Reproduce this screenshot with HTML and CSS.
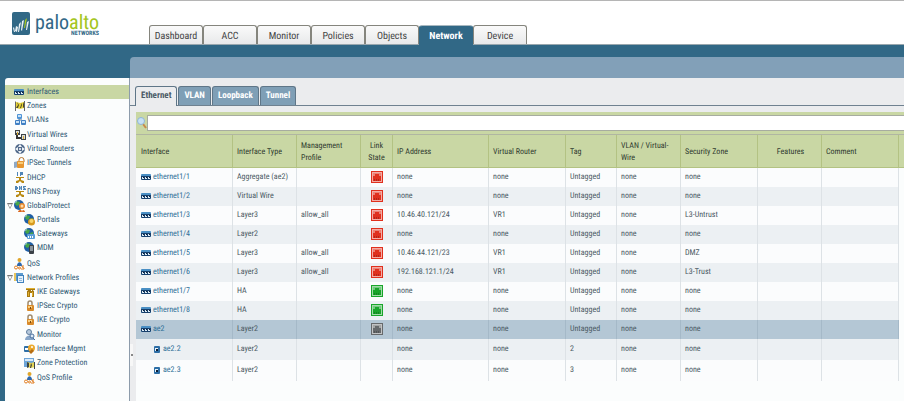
FILE: index.html
```html
<!DOCTYPE html>
<html lang="en">
<head>
    <meta charset="UTF-8">
    <meta name="viewport" content="width=device-width, initial-scale=1.0">
    <title>Network - Interfaces</title>
    <link rel="stylesheet" href="styles.css">
</head>
<body>
    <!-- shared icons -->
    <svg class="sprite" aria-hidden="true">
        <symbol id="i-interface" viewBox="0 0 12 12">
            <rect x="0" y="3" width="10" height="6" rx="1" fill="#4a8fc4"/>
            <path d="M0 5h10v3l-1 1H1L0 8z" fill="#173f6b"/>
            <path d="M1 6h2v2H1zM4 6h2v2H4zM7 6h2v2H7z" fill="#dcecf7"/>
            <path d="M2 6h1v1H2zM5 6h1v1H5zM8 6h1v1H8z" fill="#0b1f38"/>
        </symbol>
        <symbol id="i-sub" viewBox="0 0 12 12">
            <rect x="3" y="3" width="6" height="7" rx="1" fill="#2d6ea6"/>
            <path d="M4 5h3v3H4z" fill="#e8f2fa"/>
            <path d="M5 6h2v2H5z" fill="#0b1f38"/>
        </symbol>
        <symbol id="i-zones" viewBox="0 0 12 12">
            <path d="M1 2l1-1v10H1zM10 1h1v10h-1z" fill="#666"/>
            <path d="M2 2l4 1 4-1v6L6 9 2 8z" fill="#e6d23a"/>
            <path d="M3 2l2 3-1 3H2l2-3zM7 3l1 2-1 3H6l1-3zM9 2l1 2v3L9 8z" fill="#4c4a2a"/>
        </symbol>
        <symbol id="i-vlans" viewBox="0 0 12 12">
            <path d="M5 4v3M3 8l2-2h3l2 2" stroke="#5d7892" fill="none"/>
            <rect x="3" y="0" width="5" height="5" rx="1" fill="#4f94d6"/>
            <rect x="1" y="6" width="5" height="5" rx="1" fill="#3f7fc4"/>
            <rect x="7" y="6" width="5" height="5" rx="1" fill="#3f7fc4"/>
            <path d="M4 1h3v2H4zM2 7h3v2H2zM8 7h3v2H8z" fill="#c9e2f7"/>
        </symbol>
        <symbol id="i-vwires" viewBox="0 0 12 12">
            <path d="M1 1h5v5H1zM7 5h5v6H7z" fill="#3f4446"/>
            <path d="M2 2h3v2H2zM8 6h3v4H8z" fill="#d9dcdc"/>
            <path d="M3 6v3h4" stroke="#333" stroke-width="2" fill="none"/>
            <path d="M3 3h1v3H3zM9 7h1v3H9z" fill="#d7aa35"/>
        </symbol>
        <symbol id="i-router" viewBox="0 0 12 12">
            <circle cx="6" cy="6" r="5" fill="#50698a"/>
            <path d="M6 1l2 3H4zM6 11l2-3H4zM1 6l3-2v4zM11 6L8 4v4z" fill="#eef3f7"/>
            <circle cx="6" cy="6" r="1" fill="#fff"/>
        </symbol>
        <symbol id="i-tunnel" viewBox="0 0 12 12">
            <path d="M0 5l5-1v6l-5 1z" fill="#8fa9c5"/>
            <path d="M5 5V3a2 2 0 0 1 5 0v2" stroke="#b8742a" fill="none"/>
            <rect x="3" y="4" width="7" height="7" rx="1" fill="#e7962f"/>
            <path d="M4 5h5v2H4z" fill="#f8cb78"/>
        </symbol>
        <symbol id="i-dhcp" viewBox="0 0 12 12">
            <path d="M3 0h1v4H3zM6 0h3v3H7v1H6z" fill="#4f86b8"/>
            <path d="M2 5h8v1H2zM5 6h2v2l3 1v2H8L6 9l-2 2H2V9l3-1z" fill="#b98a12"/>
        </symbol>
        <symbol id="i-dns" viewBox="0 0 12 12">
            <path d="M1 0h2v1h1v2H3v1H1zM5 0h1l1 2V0h1v4H7L6 2v2H5zM9 0h3v1h-2l2 2v1H9V3h1L9 2z" fill="#4f86b8"/>
            <path d="M2 5h8v1H2zM5 6h2v2l3 1v2H8L6 9l-2 2H2V9l3-1z" fill="#b98a12"/>
        </symbol>
        <symbol id="i-globe" viewBox="0 0 12 12">
            <circle cx="5" cy="5" r="5" fill="#1f5fa5"/>
            <path d="M2 1l4 1-1 3-2 1-2-2zM6 5l3-1v3L6 9z" fill="#45a548"/>
            <path d="M1 2l2-1-1 2z" fill="#b9ddf5"/>
        </symbol>
        <symbol id="i-gp" viewBox="0 0 12 12">
            <use href="#i-globe"/>
            <circle cx="8" cy="6" r="3" fill="#e8892b"/>
            <circle cx="8" cy="6" r="1.500" fill="#fbdcae"/>
            <path d="M4 12c0-3 7-3 7 0z" fill="#d9661d"/>
            <path d="M7 9h2l-1 3z" fill="#fff"/>
        </symbol>
        <symbol id="i-portal" viewBox="0 0 12 12">
            <use href="#i-globe"/>
            <circle cx="7.500" cy="8" r="3.500" fill="#d79a1e"/>
            <circle cx="7.500" cy="7" r="2" fill="#f9d56a"/>
        </symbol>
        <symbol id="i-gateway" viewBox="0 0 12 12">
            <use href="#i-globe"/>
            <rect x="3" y="6" width="8" height="5" rx="1" fill="#5b9ed6"/>
            <path d="M4 8h1v2H4zM6 8h1v2H6zM8 8h1v2H8z" fill="#fff"/>
        </symbol>
        <symbol id="i-mdm" viewBox="0 0 12 12">
            <use href="#i-globe"/>
            <rect x="5" y="3" width="5" height="9" rx="1" fill="#3b4147"/>
            <path d="M6 4h3v5H6z" fill="#8a949c"/>
        </symbol>
        <symbol id="i-qos" viewBox="0 0 12 12">
            <circle cx="5.500" cy="2" r="2" fill="#e0a52a"/>
            <path d="M3 8c0-5 5-5 5 0z" fill="#2d68ad"/>
            <circle cx="2" cy="9.500" r="1.500" fill="#fff" stroke="#e07b1c"/>
            <circle cx="5.500" cy="10" r="1" fill="#fff" stroke="#e07b1c"/>
            <path d="M10 8H8v1l2 1v1H7" fill="none" stroke="#e07b1c"/>
        </symbol>
        <symbol id="i-profiles" viewBox="0 0 12 12">
            <path d="M0 1h7v8H0z" fill="#e9c65e"/>
            <path d="M2 1h7v8H2z" fill="#5c9bd0"/>
            <path d="M3 3h7v8H3z" fill="#3f81bd"/>
            <path d="M4 4h5v6H4z" fill="#e4f0fa"/>
            <path d="M5 6h3v1H5zM5 8h3v1H5z" fill="#8db7da"/>
        </symbol>
        <symbol id="i-ike" viewBox="0 0 12 12">
            <path d="M2 2h9v2H2zM3 5h7v2H3zM4 4h2v7H3V6zM8 4h1l1 2v5H8zM6 3h1v3H6z" fill="#a87a10"/>
            <path d="M2 2h9v1H2zM4 6h1v4H4zM8 6h1v4H8z" fill="#e0b030"/>
        </symbol>
        <symbol id="i-lock" viewBox="0 0 12 12">
            <path d="M4 6V3a2 2 0 0 1 4 0v3" stroke="#a08a6c" stroke-width="1.500" fill="none"/>
            <rect x="3" y="5" width="7" height="6" rx="1" fill="#d98a2a"/>
            <path d="M4 6h4v2H4z" fill="#f8cf80"/>
            <path d="M6 7h1v2H6z" fill="#7a4a10"/>
        </symbol>
        <symbol id="i-monitor" viewBox="0 0 12 12">
            <circle cx="5" cy="3" r="2.500" fill="#b7c9dc" stroke="#5f7d9e"/>
            <path d="M1 11c0-6 9-6 9 0z" fill="#88a6c8"/>
            <circle cx="8" cy="7" r="2" fill="#dce9f6" stroke="#496f9d"/>
            <path d="M9 9l2 2" stroke="#496f9d"/>
        </symbol>
        <symbol id="i-mgmt" viewBox="0 0 12 12">
            <rect x="0" y="3" width="8" height="6" rx="1" fill="#2d6ea6"/>
            <path d="M1 5h3v2H1z" fill="#fff"/>
            <circle cx="7.500" cy="5" r="3.500" fill="#eba92d"/>
            <path d="M5 9l3-3 2 2-3 3z" fill="#b56d13"/>
            <circle cx="8" cy="4" r="1" fill="#fff"/>
        </symbol>
        <symbol id="i-zoneprot" viewBox="0 0 12 12">
            <path d="M0 1h10v9H0z" fill="#6da5d8"/>
            <path d="M1 2h8v2H1z" fill="#d7e9f8"/>
            <path d="M3 5l4 1 4-1v5l-4 1-4-1z" fill="#e4d456"/>
            <path d="M3 5l2 1v4l-2 1zM7 6l1 2-1 3H6zM10 5h1v7h-1z" fill="#3d4442"/>
        </symbol>
        <symbol id="i-port" viewBox="0 0 12 12">
            <path d="M0 0h12v12H0z" fill="currentColor"/>
            <path d="M1 1h10v10H1z" fill="#fff" opacity=".6"/>
            <path d="M2 2h8v8H2z" fill="currentColor" opacity=".35"/>
            <path d="M2 5h2V3h4v2h2v5H2z" fill="currentColor"/>
            <path d="M3 8h1v2H3zM5 8h1v2H5zM7 8h1v2H7z" fill="#000" opacity=".2"/>
        </symbol>
    </svg>

    <header class="top">
        <a class="logo" href="#">
            <svg class="logo-mark" viewBox="0 0 18 23" aria-hidden="true">
                <rect width="18" height="23" rx="2" fill="#316886"/>
                <path d="M1 16l1-1 1 5H2zM4 14l2 1-1 5-2-1zM7 12l2-2-2 10H6z" fill="#e9f1f5"/>
                <path d="M10 9l2-1-2 11-1-1zM15 10l2-1-2 9h-1z" fill="#e9f1f5"/>
                <path d="M13 8l2-2-2 10h-1z" fill="#a3c520"/>
            </svg>
            <span class="logo-text">
                <span class="logo-name">palo<span class="green">alto</span></span>
                <span class="logo-sub">NETWORKS</span>
            </span>
        </a>
        <nav class="main-tabs">
            <a href="#">Dashboard</a>
            <a href="#">ACC</a>
            <a href="#">Monitor</a>
            <a href="#">Policies</a>
            <a href="#">Objects</a>
            <a href="#" class="active">Network</a>
            <a href="#">Device</a>
        </nav>
    </header>

    <div class="page">
        <nav class="sidebar">
            <ul class="tree">
                <li><a href="#" class="selected"><svg><use href="#i-interface"/></svg>Interfaces</a></li>
                <li><a href="#"><svg><use href="#i-zones"/></svg>Zones</a></li>
                <li><a href="#"><svg><use href="#i-vlans"/></svg>VLANs</a></li>
                <li><a href="#"><svg><use href="#i-vwires"/></svg>Virtual Wires</a></li>
                <li><a href="#"><svg><use href="#i-router"/></svg>Virtual Routers</a></li>
                <li><a href="#"><svg><use href="#i-tunnel"/></svg>IPSec Tunnels</a></li>
                <li><a href="#"><svg><use href="#i-dhcp"/></svg>DHCP</a></li>
                <li><a href="#"><svg><use href="#i-dns"/></svg>DNS Proxy</a></li>
                <li>
                    <a href="#" class="open"><svg><use href="#i-gp"/></svg>GlobalProtect</a>
                    <ul>
                        <li><a href="#"><svg><use href="#i-portal"/></svg>Portals</a></li>
                        <li><a href="#"><svg><use href="#i-gateway"/></svg>Gateways</a></li>
                        <li><a href="#"><svg><use href="#i-mdm"/></svg>MDM</a></li>
                    </ul>
                </li>
                <li><a href="#"><svg><use href="#i-qos"/></svg>QoS</a></li>
                <li>
                    <a href="#" class="open"><svg><use href="#i-profiles"/></svg>Network Profiles</a>
                    <ul>
                        <li><a href="#"><svg><use href="#i-ike"/></svg>IKE Gateways</a></li>
                        <li><a href="#"><svg><use href="#i-lock"/></svg>IPSec Crypto</a></li>
                        <li><a href="#"><svg><use href="#i-lock"/></svg>IKE Crypto</a></li>
                        <li><a href="#"><svg><use href="#i-monitor"/></svg>Monitor</a></li>
                        <li><a href="#"><svg><use href="#i-mgmt"/></svg>Interface Mgmt</a></li>
                        <li><a href="#"><svg><use href="#i-zoneprot"/></svg>Zone Protection</a></li>
                        <li><a href="#"><svg><use href="#i-qos"/></svg>QoS Profile</a></li>
                    </ul>
                </li>
            </ul>
        </nav>

        <main class="content">
            <div class="banner"></div>
            <div class="body">
                <button class="splitter" aria-label="Collapse menu"></button>
                <div class="panel">
                    <nav class="sub-tabs">
                        <a href="#" class="active">Ethernet</a>
                        <a href="#">VLAN</a>
                        <a href="#">Loopback</a>
                        <a href="#">Tunnel</a>
                    </nav>
                    <div class="grid">
                        <div class="search">
                            <label for="filter" aria-label="Filter">
                                <svg viewBox="0 0 10 12"><path d="M6 7l3 4" stroke="#c98a4a" stroke-width="2"/><circle cx="4" cy="4" r="3.500" fill="#c6e0f5" stroke="#8fb4d6"/></svg>
                            </label>
                            <input type="text" id="filter">
                        </div>
                        <table>
                            <colgroup>
                                <col class="w97"><col class="w64"><col class="w64"><col class="w32"><col class="w96"><col class="w77"><col class="w51"><col class="w64"><col class="w77"><col class="w64"><col class="w77"><col>
                            </colgroup>
                            <thead>
                                <tr>
                                    <th>Interface</th>
                                    <th>Interface Type</th>
                                    <th>Management Profile</th>
                                    <th class="center">Link State</th>
                                    <th>IP Address</th>
                                    <th>Virtual Router</th>
                                    <th>Tag</th>
                                    <th>VLAN / Virtual-Wire</th>
                                    <th>Security Zone</th>
                                    <th class="center features">Features</th>
                                    <th>Comment</th>
                                    <th></th>
                                </tr>
                            </thead>
                            <tbody>
                                <tr>
                                    <td><a href="#"><svg><use href="#i-interface"/></svg>ethernet1/1</a></td><td>Aggregate (ae2)</td><td></td>
                                    <td class="center"><svg class="down"><use href="#i-port"/></svg></td>
                                    <td>none</td><td>none</td><td>Untagged</td><td>none</td><td>none</td><td></td><td></td><td></td>
                                </tr>
                                <tr>
                                    <td><a href="#"><svg><use href="#i-interface"/></svg>ethernet1/2</a></td><td>Virtual Wire</td><td></td>
                                    <td class="center"><svg class="down"><use href="#i-port"/></svg></td>
                                    <td>none</td><td>none</td><td>Untagged</td><td>none</td><td>none</td><td></td><td></td><td></td>
                                </tr>
                                <tr>
                                    <td><a href="#"><svg><use href="#i-interface"/></svg>ethernet1/3</a></td><td>Layer3</td><td>allow_all</td>
                                    <td class="center"><svg class="down"><use href="#i-port"/></svg></td>
                                    <td>10.46.40.121/24</td><td>VR1</td><td>Untagged</td><td>none</td><td>L3-Untrust</td><td></td><td></td><td></td>
                                </tr>
                                <tr>
                                    <td><a href="#"><svg><use href="#i-interface"/></svg>ethernet1/4</a></td><td>Layer2</td><td></td>
                                    <td class="center"><svg class="down"><use href="#i-port"/></svg></td>
                                    <td>none</td><td>none</td><td>Untagged</td><td>none</td><td>none</td><td></td><td></td><td></td>
                                </tr>
                                <tr>
                                    <td><a href="#"><svg><use href="#i-interface"/></svg>ethernet1/5</a></td><td>Layer3</td><td>allow_all</td>
                                    <td class="center"><svg class="down"><use href="#i-port"/></svg></td>
                                    <td>10.46.44.121/23</td><td>VR1</td><td>Untagged</td><td>none</td><td>DMZ</td><td></td><td></td><td></td>
                                </tr>
                                <tr>
                                    <td><a href="#"><svg><use href="#i-interface"/></svg>ethernet1/6</a></td><td>Layer3</td><td>allow_all</td>
                                    <td class="center"><svg class="down"><use href="#i-port"/></svg></td>
                                    <td>192.168.121.1/24</td><td>VR1</td><td>Untagged</td><td>none</td><td>L3-Trust</td><td></td><td></td><td></td>
                                </tr>
                                <tr>
                                    <td><a href="#"><svg><use href="#i-interface"/></svg>ethernet1/7</a></td><td>HA</td><td></td>
                                    <td class="center"><svg class="up"><use href="#i-port"/></svg></td>
                                    <td>none</td><td>none</td><td>Untagged</td><td>none</td><td>none</td><td></td><td></td><td></td>
                                </tr>
                                <tr>
                                    <td><a href="#"><svg><use href="#i-interface"/></svg>ethernet1/8</a></td><td>HA</td><td></td>
                                    <td class="center"><svg class="up"><use href="#i-port"/></svg></td>
                                    <td>none</td><td>none</td><td>Untagged</td><td>none</td><td>none</td><td></td><td></td><td></td>
                                </tr>
                                <tr class="selected">
                                    <td><a href="#"><svg><use href="#i-interface"/></svg>ae2</a></td><td>Layer2</td><td></td>
                                    <td class="center"><svg class="off"><use href="#i-port"/></svg></td>
                                    <td>none</td><td>none</td><td>Untagged</td><td>none</td><td>none</td><td></td><td></td><td></td>
                                </tr>
                                <tr class="sub">
                                    <td><a href="#"><svg><use href="#i-sub"/></svg>ae2.2</a></td><td>Layer2</td><td></td><td></td>
                                    <td>none</td><td>none</td><td>2</td><td>none</td><td>none</td><td></td><td></td><td></td>
                                </tr>
                                <tr class="sub">
                                    <td><a href="#"><svg><use href="#i-sub"/></svg>ae2.3</a></td><td>Layer2</td><td></td><td></td>
                                    <td>none</td><td>none</td><td>3</td><td>none</td><td>none</td><td></td><td></td><td></td>
                                </tr>
                            </tbody>
                        </table>
                    </div>
                </div>
            </div>
        </main>
    </div>
</body>
</html>
```
FILE: styles.css
```css
* {
    box-sizing: border-box;
}

body {
    margin: 0;
    min-height: 100vh;
    display: flex;
    flex-direction: column;
    font-family: "Roboto Condensed", Roboto, sans-serif;
    font-size: 8px;
    line-height: 14px;
    text-rendering: geometricPrecision;
    color: #4a5963;
    background: #316886;
}

a {
    color: inherit;
    text-decoration: none;
}

ul {
    list-style: none;
    margin: 0;
    padding: 0;
}

svg {
    width: 12px;
    height: 12px;
    flex: none;
}

.sprite {
    position: absolute;
    width: 0;
    height: 0;
}

/* header */
.top {
    display: flex;
    align-items: flex-end;
    height: 45px;
    background: #fff;
    border-top: 1px solid #b5b5b5;
    border-bottom: 1px solid #99a7ae;
}

.logo {
    display: flex;
    align-items: flex-end;
    gap: 5px;
    width: 149px;
    padding: 0 0 7px 12px;
}

.logo-mark {
    width: 18px;
    height: 23px;
    margin-bottom: 2px;
}

.logo-text {
    display: flex;
    flex-direction: column;
    width: 64px;
}

.logo-name {
    font-size: 20px;
    line-height: 18px;
    color: #316886;
}

.green {
    color: #a3c520;
}

.logo-sub {
    font-size: 6px;
    font-weight: bold;
    line-height: 6px;
    text-align: right;
    color: #316886;
}

.main-tabs {
    display: flex;
}

.main-tabs a {
    width: 54px;
    height: 19px;
    border: 1px solid #85857d;
    border-bottom: 0;
    border-radius: 3px 3px 0 0;
    background: linear-gradient(#fafafa, #e8e9ea);
    color: #444;
    font-size: 10px;
    line-height: 21px;
    text-align: center;
}

.main-tabs .active {
    height: 20px;
    margin-bottom: -1px;
    border-color: #316886;
    border-top-color: #a8b8c0;
    background: #316886;
    color: #fff;
    font-weight: bold;
}

/* layout */
.page {
    flex: 1;
    display: flex;
    padding: 12px 0 0 5px;
}

.sidebar {
    width: 125px;
    margin-top: 21px;
    padding-top: 7px;
    background: #fbfdfd;
    border-radius: 3px 0 0 0;
    border-right: 1px solid #8d9cab;
}

.tree a {
    display: flex;
    align-items: center;
    gap: 1px;
    height: 14px;
    padding-left: 9px;
    line-height: 16px;
    color: #2f5975;
}

.tree a.selected {
    background: #c9d7a4;
}

.tree li:nth-child(3n) {
    padding-bottom: 1px;
}

.tree ul a {
    padding-left: 19px;
}

.tree a.open {
    padding-left: 0;
}

.tree .open::before {
    content: "";
    width: 6px;
    height: 6px;
    margin: 0 0 0 2px;
    background: #777;
    clip-path: polygon(0 0, 100% 0, 50% 100%, 0 0, 20% 20%, 50% 80%, 80% 20%, 20% 20%);
}

.content {
    flex: 1;
    min-width: 0;
    display: flex;
    flex-direction: column;
    border-radius: 4px 0 0 0;
    overflow: hidden;
}

.banner {
    height: 21px;
    background: #82a0b8;
}

.body {
    flex: 1;
    display: flex;
    background: #ebecee;
}

.splitter {
    align-self: center;
    width: 3px;
    height: 22px;
    margin: 230px 3px 0 0;
    padding: 0;
    border: 0;
    background: linear-gradient(#888, #888) center / 2px 2px no-repeat #f7f7f7;
}

.panel {
    flex: 1;
    min-width: 0;
    display: flex;
    flex-direction: column;
}

.sub-tabs {
    display: flex;
    align-items: flex-end;
    gap: 1px;
    height: 28px;
    margin-left: -6px;
    padding-left: 5px;
    border-bottom: 1px solid #6f8190;
}

.sub-tabs a {
    height: 19px;
    padding: 0 5px;
    border: 1px solid #5f7688;
    border-bottom: 0;
    border-radius: 3px 3px 0 0;
    background: #7f9fb6;
    color: #fff;
    font-size: 9px;
    font-weight: bold;
    line-height: 19px;
}

.sub-tabs .active {
    height: 20px;
    margin-bottom: -1px;
    background: #ebecee;
    color: #4a5a66;
}

/* grid */
.grid {
    flex: 1;
    margin-top: 6px;
    background: #fbfdfd;
}

.search {
    display: flex;
    align-items: center;
    height: 23px;
    padding-left: 1px;
    background: #c9d7a4;
    border-bottom: 1px solid #b0b6a2;
}

.search label {
    display: flex;
    width: 10px;
}

.search svg {
    width: 10px;
}

.search input {
    flex: 1;
    min-width: 0;
    height: 16px;
    border: 1px solid #a7aca0;
    border-right: 0;
    padding: 0 4px;
    font: inherit;
}

table {
    width: 100%;
    table-layout: fixed;
    border-collapse: separate;
    border-spacing: 0;
}

.w32 { width: 32px; }
.w51 { width: 51px; }
.w64 { width: 64px; }
.w77 { width: 77px; }
.w96 { width: 96px; }
.w97 { width: 97px; }

th,
td {
    padding: 0 4px;
    text-align: left;
    white-space: nowrap;
    border-right: 1px solid #dde2e6;
}

th {
    height: 33px;
    padding-top: 2px;
    line-height: 12px;
    font-weight: normal;
    white-space: normal;
    color: #2f3a2f;
    background: #c9d7a4;
    border-right-color: #b3c283;
    border-bottom: 1px solid #b3c283;
}

td {
    height: 19px;
    padding-bottom: 1px;
}

th:first-child,
td:first-child {
    padding-left: 5px;
}

th:last-child,
td:last-child {
    border-right: 0;
}

.center {
    text-align: center;
}

.features {
    padding-left: 6px;
}

tbody tr {
    background: #fbfcfd;
}

tbody tr:nth-child(even) {
    background: #ecf0f3;
}

tbody td:last-child {
    background: #fbfdfd;
}

tbody .selected {
    background: #b4c7d5;
}

.selected td {
    border-color: #a5b9c8;
}

td a {
    display: flex;
    align-items: center;
    color: #2f6f98;
}

td svg {
    vertical-align: middle;
}

td .down {
    color: #e0301e;
}

td .up {
    color: #18a52a;
}

td .off {
    color: #66696b;
}

.sub td {
    height: 21px;
    padding-bottom: 2px;
}

.sub a {
    padding-left: 10px;
}
```
